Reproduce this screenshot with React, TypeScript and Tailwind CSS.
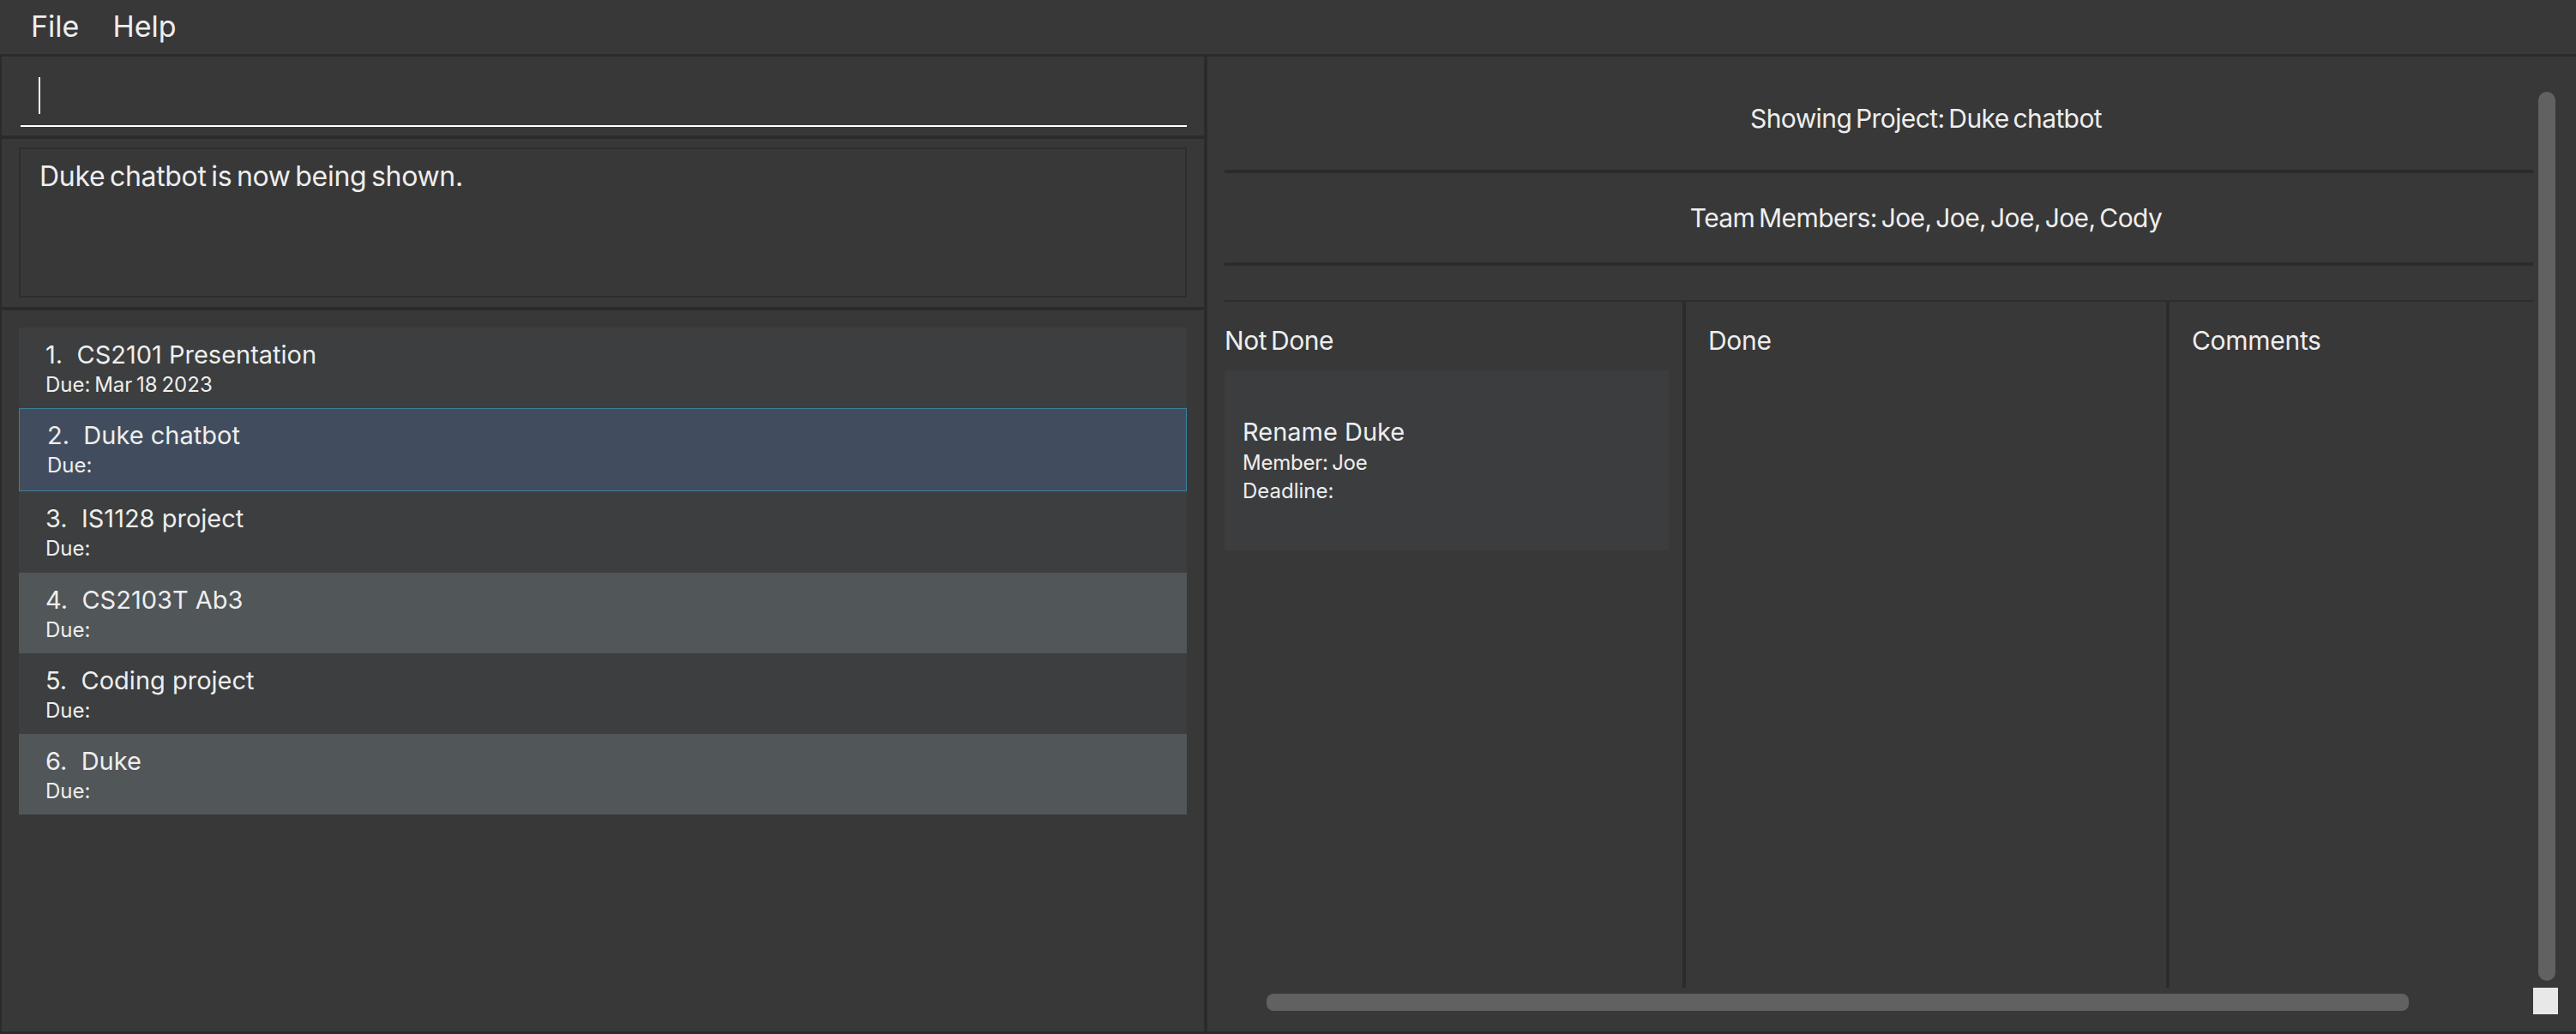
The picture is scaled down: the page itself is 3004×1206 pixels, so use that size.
import React from "react";

const projects = [
  { n: "1.", name: "CS2101 Presentation", due: "Due: Mar 18 2023" },
  { n: "2.", name: "Duke chatbot", due: "Due:" },
  { n: "3.", name: "IS1128 project", due: "Due:" },
  { n: "4.", name: "CS2103T Ab3", due: "Due:" },
  { n: "5.", name: "Coding project", due: "Due:" },
  { n: "6.", name: "Duke", due: "Due:" },
];

function ProjectRow({ p, i }: { p: (typeof projects)[number]; i: number }) {
  const selected = i === 1;
  const alt = i === 3 || i === 5;
  const bg = selected
    ? "bg-[#414d5f] border border-[#3a8199] h-[97px] pl-[32px] pt-[16px]"
    : alt
    ? "bg-[#515658] h-[94px] pl-[31px] pt-[17px]"
    : i === 2
    ? "bg-[#3c3e3f] h-[95px] pl-[31px] pt-[17px]"
    : "bg-[#3c3e3f] h-[94px] pl-[31px] pt-[17px]";
  return (
    <div className={`flex flex-col ${bg}`}>
      <div className="text-[29px] leading-none whitespace-pre">
        {p.n}  {p.name}
      </div>
      <div className="text-[24px] leading-none mt-[9px] [word-spacing:-2px]">{p.due}</div>
    </div>
  );
}

export default function App() {
  return (
    <div className="w-[3004px] h-[1206px] bg-[#383838] text-[#eeeeee] flex flex-col overflow-hidden font-['Inter','Noto_Sans',sans-serif]">
      {/* Menu bar */}
      <div className="h-[66px] shrink-0 border-b-[3px] border-[#2b2b2b] flex items-start pl-[36px] pt-[14px] gap-[39px] text-[34px] leading-none">
        <span>File</span>
        <span>Help</span>
      </div>

      {/* Main */}
      <div className="flex h-[1140px] border-b-[3px] border-[#2b2b2b]">
        {/* Left panel */}
        <div className="w-[1404px] shrink-0 border-l-2 border-[#2b2b2b] flex flex-col">
          {/* Command box */}
          <div className="h-[92px] shrink-0 pl-[22px] pr-[20px] pt-[24px]">
            <div className="h-[58px] border-b-2 border-white pl-[21px]">
              <div className="w-[2px] h-[43px] bg-white" />
            </div>
          </div>
          <div className="h-[4px] shrink-0 bg-[#2b2b2b]" />
          {/* Result display */}
          <div className="h-[196px] shrink-0 pt-[10px] pl-[20px] pr-[20px]">
            <div className="h-[175px] border-2 border-[#2d2d2d] pl-[22px] pt-[16px]">
              <div className="text-[32px] leading-none tracking-[-0.01em] [word-spacing:-3px]">Duke chatbot is now being shown.</div>
            </div>
          </div>
          <div className="h-[4px] shrink-0 bg-[#2b2b2b]" />
          {/* Project list */}
          <div className="flex-1 pt-[20px] pl-[20px] pr-[20px] flex flex-col">
            {projects.map((p, i) => (
              <ProjectRow key={i} p={p} i={i} />
            ))}
          </div>
        </div>

        <div className="w-[4px] shrink-0 bg-[#2b2b2b]" />

        {/* Right panel */}
        <div className="relative flex-1 flex flex-col pl-[20px]">
          <div className="w-[1526px] h-[1086px] overflow-hidden">
            <div className="w-[1636px] flex flex-col">
              <div className="h-[132px] pt-[57px] flex justify-center">
                <div className="text-[30px] leading-none tracking-[-0.02em] [word-spacing:-3px]">Showing Project: Duke chatbot</div>
              </div>
              <div className="h-[4px] bg-[#2b2b2b]" />
              <div className="h-[104px] pt-[37px] flex justify-center">
                <div className="text-[30px] leading-none tracking-[-0.02em] [word-spacing:-3px]">Team Members: Joe, Joe, Joe, Joe, Cody</div>
              </div>
              <div className="h-[4px] bg-[#2b2b2b]" />
              <div className="h-[40px]" />
              <div className="h-[2px] bg-[#2d2d2d]" />
              <div className="h-[800px] flex">
                <div className="w-[534px] shrink-0 flex flex-col pt-[30px]">
                  <div className="text-[30px] leading-none tracking-[-0.015em] [word-spacing:-3px]">Not Done</div>
                  <div className="mt-[20px] w-[518px] h-[210px] bg-[#3c3d3f] pl-[21px] pt-[57px] flex flex-col">
                    <div className="text-[29px] leading-none">Rename Duke</div>
                    <div className="text-[24px] leading-none mt-[10px] tracking-[-0.01em] [word-spacing:-2px]">Member: Joe</div>
                    <div className="text-[24px] leading-none mt-[9px]">Deadline:</div>
                  </div>
                </div>
                <div className="w-[4px] shrink-0 bg-[#2b2b2b]" />
                <div className="w-[560px] shrink-0 pt-[30px] pl-[26px]">
                  <div className="text-[30px] leading-none tracking-[-0.01em]">Done</div>
                </div>
                <div className="w-[4px] shrink-0 bg-[#2b2b2b]" />
                <div className="w-[534px] shrink-0 pt-[30px] pl-[26px]">
                  <div className="text-[30px] leading-none tracking-[-0.01em]">Comments</div>
                </div>
              </div>
            </div>
          </div>

          {/* Scrollbars */}
          <div className="absolute left-[1552px] top-[41px] w-[20px] h-[1037px] rounded-[10px] bg-[#616161]" />
          <div className="absolute left-[69px] top-[1093px] w-[1332px] h-[20px] rounded-[8px] bg-[#616161]" />
          <div className="absolute left-[1546px] top-[1086px] w-[29px] h-[31px] bg-[#e8e8e8]" />
        </div>
      </div>
    </div>
  );
}
